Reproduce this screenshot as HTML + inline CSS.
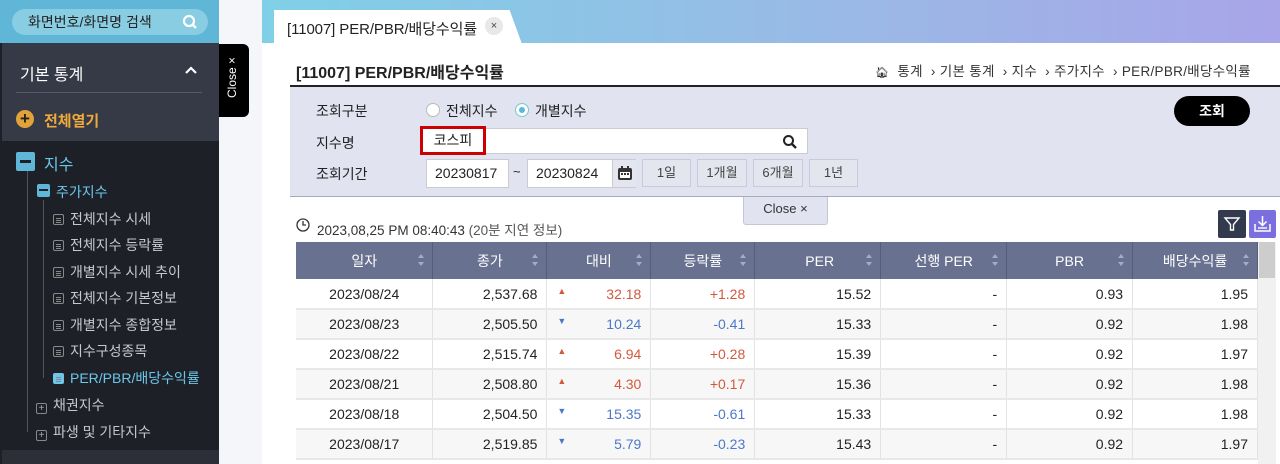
<!DOCTYPE html>
<html><head><meta charset="utf-8"><style>
*{box-sizing:border-box;margin:0;padding:0}
body{width:1280px;height:464px;overflow:hidden;position:relative;background:#f4f6fa;font-family:"Liberation Sans","Noto Sans CJK KR",sans-serif;font-size:13px;color:#222}
.abs{position:absolute}
#side{left:0;top:0;width:219px;height:464px;background:#1e2027}
.tree{color:#c8c8cc;font-size:14px}
.tree div{position:absolute;white-space:nowrap}
.doc{display:inline-block;width:11px;height:11px;border:1px solid #888;border-radius:2px;vertical-align:-1px;margin-right:6px;background:linear-gradient(#888,#888) 2px 3px/5px 1px no-repeat,linear-gradient(#888,#888) 2px 5px/5px 1px no-repeat,linear-gradient(#888,#888) 2px 7px/5px 1px no-repeat}
.plus{display:inline-block;width:11px;height:11px;border:1px solid #888;border-radius:2px;vertical-align:-1px;margin-right:6px;text-align:center;line-height:9px;font-size:10px;color:#aaa}
table{border-collapse:collapse;position:absolute;left:296px;top:242px;width:962px}
th{background:#687290;color:#fff;font-weight:normal;height:37px;font-size:14px;border-right:1px solid #556078;position:relative}
th:after{content:"";position:absolute;right:8px;top:12px;width:0;height:0;border-left:3px solid transparent;border-right:3px solid transparent;border-bottom:4px solid #a5adc4}
th i{position:absolute;right:8px;top:20px;width:0;height:0;border-left:3px solid transparent;border-right:3px solid transparent;border-top:4px solid #a5adc4}
td{height:30px;border-right:1px solid #e3e3e3;border-bottom:2px solid #e8e8e8;text-align:right;padding-right:9px;font-size:14px}
tr:nth-child(odd) td{background:#f7f7f7}
tr.w td{background:#fff}
.up{color:#d4593c}.dn{color:#4d78c7}
.btn{position:absolute;top:159px;height:28px;background:#e4e6ef;border:1px solid #c9cbd8;text-align:center;line-height:26px;font-size:13px;color:#444}
</style></head><body>
<div id="side" class="abs">
 <div class="abs" style="left:0;top:0;width:219px;height:43px;background:#5fb6d6"></div>
 <div class="abs" style="left:12px;top:9px;width:196px;height:26px;border-radius:13px;background:#89cde3;color:#222;font-size:14px;line-height:26px;padding-left:16px">화면번호/화면명 검색
  <svg class="abs" style="right:10px;top:5px" width="16" height="16" viewBox="0 0 16 16"><circle cx="7" cy="7" r="5" stroke="#fff" stroke-width="2.2" fill="none"/><path d="M10.5 10.5 14 14" stroke="#fff" stroke-width="2.4"/></svg></div>
 <div class="abs" style="left:2px;top:43px;width:217px;height:98px;background:#363a47"></div>
 <div class="abs" style="left:20px;top:61px;color:#fff;font-size:16px">기본 통계</div>
 <svg class="abs" style="left:184px;top:65px" width="14" height="10"><path d="M2 8 7 3 12 8" stroke="#fff" stroke-width="2.2" fill="none"/></svg>
 <div class="abs" style="left:16px;top:92px;width:186px;height:1px;background:#555a66"></div>
 <div class="abs" style="left:16px;top:110px;width:18px;height:18px;border-radius:50%;background:#e2a23a;color:#222;text-align:center;line-height:18px;font-weight:bold;font-size:17px">+</div>
 <div class="abs" style="left:44px;top:110px;color:#f0a93b;font-size:15px;font-weight:bold">전체열기</div>
 <div class="abs" style="left:27px;top:170px;width:1px;height:262px;background:#555"></div>
 <div class="abs" style="left:43px;top:200px;width:1px;height:178px;background:#555"></div>
 <div class="tree">
  <div style="left:16px;top:152px;width:19px;height:19px;background:#5fb6d6;border-radius:2px"><span class="abs" style="left:4px;top:8px;width:11px;height:3px;background:#1e2027"></span></div>
  <div style="left:44px;top:151px;color:#6cc7ea;font-size:16px">지수</div>
  <div style="left:37px;top:184px;width:13px;height:13px;background:#5fb6d6;border-radius:2px"><span class="abs" style="left:2px;top:5px;width:9px;height:2px;background:#1e2027"></span></div>
  <div style="left:56px;top:182px;color:#6cc7ea">주가지수</div>
  <div style="left:53px;top:209px"><span class="doc"></span>전체지수 시세</div>
  <div style="left:53px;top:235px"><span class="doc"></span>전체지수 등락률</div>
  <div style="left:53px;top:262px"><span class="doc"></span>개별지수 시세 추이</div>
  <div style="left:53px;top:288px"><span class="doc"></span>전체지수 기본정보</div>
  <div style="left:53px;top:315px"><span class="doc"></span>개별지수 종합정보</div>
  <div style="left:53px;top:341px"><span class="doc"></span>지수구성종목</div>
  <div style="left:53px;top:368px;color:#6cc7ea"><span class="doc" style="border-color:#6cc7ea;background-color:#6cc7ea"></span>PER/PBR/배당수익률</div>
  <div style="left:36px;top:395px"><span class="plus">+</span>채권지수</div>
  <div style="left:36px;top:422px"><span class="plus">+</span>파생 및 기타지수</div>
 </div>
 <div class="abs" style="left:2px;top:450px;width:217px;height:14px;background:#2c2f38"></div>
</div>
<div class="abs" style="left:219px;top:44px;width:30px;height:73px;background:#000;border-radius:0 6px 6px 0"><div class="abs" style="left:6px;top:54px;transform:rotate(-90deg);transform-origin:0 0;color:#fff;font-size:12px;white-space:nowrap">Close ×</div></div>
<div class="abs" style="left:262px;top:0;width:1018px;height:43px;background:linear-gradient(90deg,#7fd0e6,#9bb8e6 60%,#a8a5e8)"></div>
<div class="abs" style="left:274px;top:10px;width:248px;height:34px;background:#fff;clip-path:polygon(0 0,95% 0,100% 100%,0 100%)"></div>
<div class="abs" style="left:287px;top:18px;font-size:15px;letter-spacing:-0.1px">[11007] PER/PBR/배당수익률</div>
<div class="abs" style="left:485px;top:17px;width:18px;height:18px;border-radius:50%;background:#e8e8e8;text-align:center;line-height:18px;font-size:11px;color:#444">×</div>
<div class="abs" style="left:262px;top:43px;width:1018px;height:421px;background:#fff"></div>
<div class="abs" style="left:296px;top:59px;font-size:16px;font-weight:bold;color:#222">[11007] PER/PBR/배당수익률</div>
<div class="abs" style="left:875px;top:60px;font-size:13.5px;color:#333;white-space:nowrap;letter-spacing:0.3px"><span style="font-size:11px">🏠︎</span>&nbsp; 통계 &nbsp;› 기본 통계 &nbsp;› 지수 &nbsp;› 주가지수 &nbsp;› PER/PBR/배당수익률</div>
<div class="abs" style="left:290px;top:85px;width:990px;height:2px;background:#222"></div>
<div class="abs" style="left:290px;top:87px;width:990px;height:110px;background:#e1e3f0;border-bottom:1px solid #a8aabb"></div>
<div class="abs" style="left:316px;top:101px;font-size:14px">조회구분</div>
<div class="abs" style="left:316px;top:133px;font-size:14px">지수명</div>
<div class="abs" style="left:316px;top:164px;font-size:14px">조회기간</div>
<div class="abs" style="left:426px;top:103px;width:14px;height:14px;border-radius:50%;background:#fff;border:1px solid #bbb"></div>
<div class="abs" style="left:446px;top:101px;font-size:14px">전체지수</div>
<div class="abs" style="left:515px;top:103px;width:14px;height:14px;border-radius:50%;background:#fff;border:1px solid #7cc;box-shadow:inset 0 0 0 3px #fff,inset 0 0 0 7px #5fb6d6"></div>
<div class="abs" style="left:535px;top:101px;font-size:14px">개별지수</div>
<div class="abs" style="left:426px;top:128px;width:382px;height:26px;background:#fff;border:1px solid #ccc"></div>
<div class="abs" style="left:420px;top:126px;width:66px;height:29px;border:3px solid #c00;background:#fff;text-align:center;line-height:23px;font-size:14px">코스피</div>
<svg class="abs" style="left:782px;top:134px" width="16" height="16"><circle cx="6.5" cy="6.5" r="4.5" stroke="#222" stroke-width="2" fill="none"/><path d="M10 10 14 14" stroke="#222" stroke-width="2.4"/></svg>
<div class="abs" style="left:426px;top:159px;width:83px;height:29px;background:#fff;border:1px solid #ccc;line-height:27px;padding-left:8px;font-size:14px">20230817</div>
<div class="abs" style="left:513px;top:164px">~</div>
<div class="abs" style="left:527px;top:159px;width:109px;height:29px;background:#fff;border:1px solid #ccc;line-height:27px;padding-left:8px;font-size:14px">20230824</div>
<div class="abs" style="left:612px;top:160px;width:24px;height:27px;background:#e4e6ef;border-left:1px solid #ccc"><svg style="margin:5px 4px" width="16" height="16"><rect x="1" y="3" width="14" height="12" rx="2" fill="#333"/><rect x="3" y="7" width="10" height="6" fill="#fff"/><rect x="4" y="8" width="2" height="2" fill="#333"/><rect x="7" y="8" width="2" height="2" fill="#333"/><rect x="10" y="8" width="2" height="2" fill="#333"/><rect x="4" y="1" width="2" height="4" fill="#333"/><rect x="10" y="1" width="2" height="4" fill="#333"/></svg></div>
<div class="btn" style="left:642px;width:49px">1일</div>
<div class="btn" style="left:697px;width:50px">1개월</div>
<div class="btn" style="left:753px;width:50px">6개월</div>
<div class="btn" style="left:809px;width:49px">1년</div>
<div class="abs" style="left:1174px;top:96px;width:76px;height:30px;border-radius:15px;background:#000;color:#fff;text-align:center;line-height:30px;font-weight:bold;font-size:14px">조회</div>
<div class="abs" style="left:743px;top:197px;width:85px;height:28px;background:#e1e3f0;border:1px solid #c4c6d4;border-top:none;border-radius:0 0 3px 3px;text-align:center;line-height:24px;font-size:13px;color:#333">Close ×</div>
<svg class="abs" style="left:296px;top:218px" width="16" height="16"><circle cx="7" cy="7" r="6" stroke="#333" stroke-width="1.3" fill="none"/><path d="M7 3V7H10" stroke="#333" stroke-width="1.3" fill="none"/></svg>
<div class="abs" style="left:317px;top:219px;font-size:13.5px;color:#333">2023,08,25 PM 08:40:43 <span style="color:#555">(20분 지연 정보)</span></div>
<div class="abs" style="left:1218px;top:210px;width:28px;height:28px;background:#333a4d;border-radius:2px"><svg style="margin:5px" width="18" height="18"><path d="M2 3H16L10.5 9.5V15H7.5V9.5Z" stroke="#fff" stroke-width="1.4" fill="none"/></svg></div>
<div class="abs" style="left:1249px;top:210px;width:27px;height:28px;background:#7b6fe0;border-radius:2px"><svg style="margin:5px 4px" width="19" height="18"><path d="M9.5 1V10M5.5 6.5 9.5 10.5 13.5 6.5M2 9V16H17V9" stroke="#fff" stroke-width="1.5" fill="none"/><path d="M5 13H14" stroke="#fff" stroke-width="1.4"/></svg></div>
<div class="abs" style="left:1258px;top:242px;width:18px;height:222px;background:#f1f1f1"></div>
<div class="abs" style="left:1259px;top:242px;width:16px;height:36px;background:#cdcdcd"></div>
<table>
<tr><th style="width:137px">일자<i></i></th><th style="width:114px">종가<i></i></th><th style="width:104px">대비<i></i></th><th style="width:104px">등락률<i></i></th><th style="width:126px;text-align:left;padding-left:50px">PER<i></i></th><th style="width:126px">선행 PER<i></i></th><th style="width:126px">PBR<i></i></th><th style="width:125px">배당수익률<i></i></th></tr>
<tr class="w"><td style="text-align:center;padding:0">2023/08/24</td><td>2,537.68</td><td class="up"><span style="float:left;padding-left:10px;font-size:9px">▲</span>32.18</td><td class="up">+1.28</td><td>15.52</td><td>-</td><td>0.93</td><td>1.95</td></tr>
<tr><td style="text-align:center;padding:0">2023/08/23</td><td>2,505.50</td><td class="dn"><span style="float:left;padding-left:10px;font-size:9px">▼</span>10.24</td><td class="dn">-0.41</td><td>15.33</td><td>-</td><td>0.92</td><td>1.98</td></tr>
<tr class="w"><td style="text-align:center;padding:0">2023/08/22</td><td>2,515.74</td><td class="up"><span style="float:left;padding-left:10px;font-size:9px">▲</span>6.94</td><td class="up">+0.28</td><td>15.39</td><td>-</td><td>0.92</td><td>1.97</td></tr>
<tr><td style="text-align:center;padding:0">2023/08/21</td><td>2,508.80</td><td class="up"><span style="float:left;padding-left:10px;font-size:9px">▲</span>4.30</td><td class="up">+0.17</td><td>15.36</td><td>-</td><td>0.92</td><td>1.98</td></tr>
<tr class="w"><td style="text-align:center;padding:0">2023/08/18</td><td>2,504.50</td><td class="dn"><span style="float:left;padding-left:10px;font-size:9px">▼</span>15.35</td><td class="dn">-0.61</td><td>15.33</td><td>-</td><td>0.92</td><td>1.98</td></tr>
<tr><td style="text-align:center;padding:0">2023/08/17</td><td>2,519.85</td><td class="dn"><span style="float:left;padding-left:10px;font-size:9px">▼</span>5.79</td><td class="dn">-0.23</td><td>15.43</td><td>-</td><td>0.92</td><td>1.97</td></tr>
</table>
</body></html>
